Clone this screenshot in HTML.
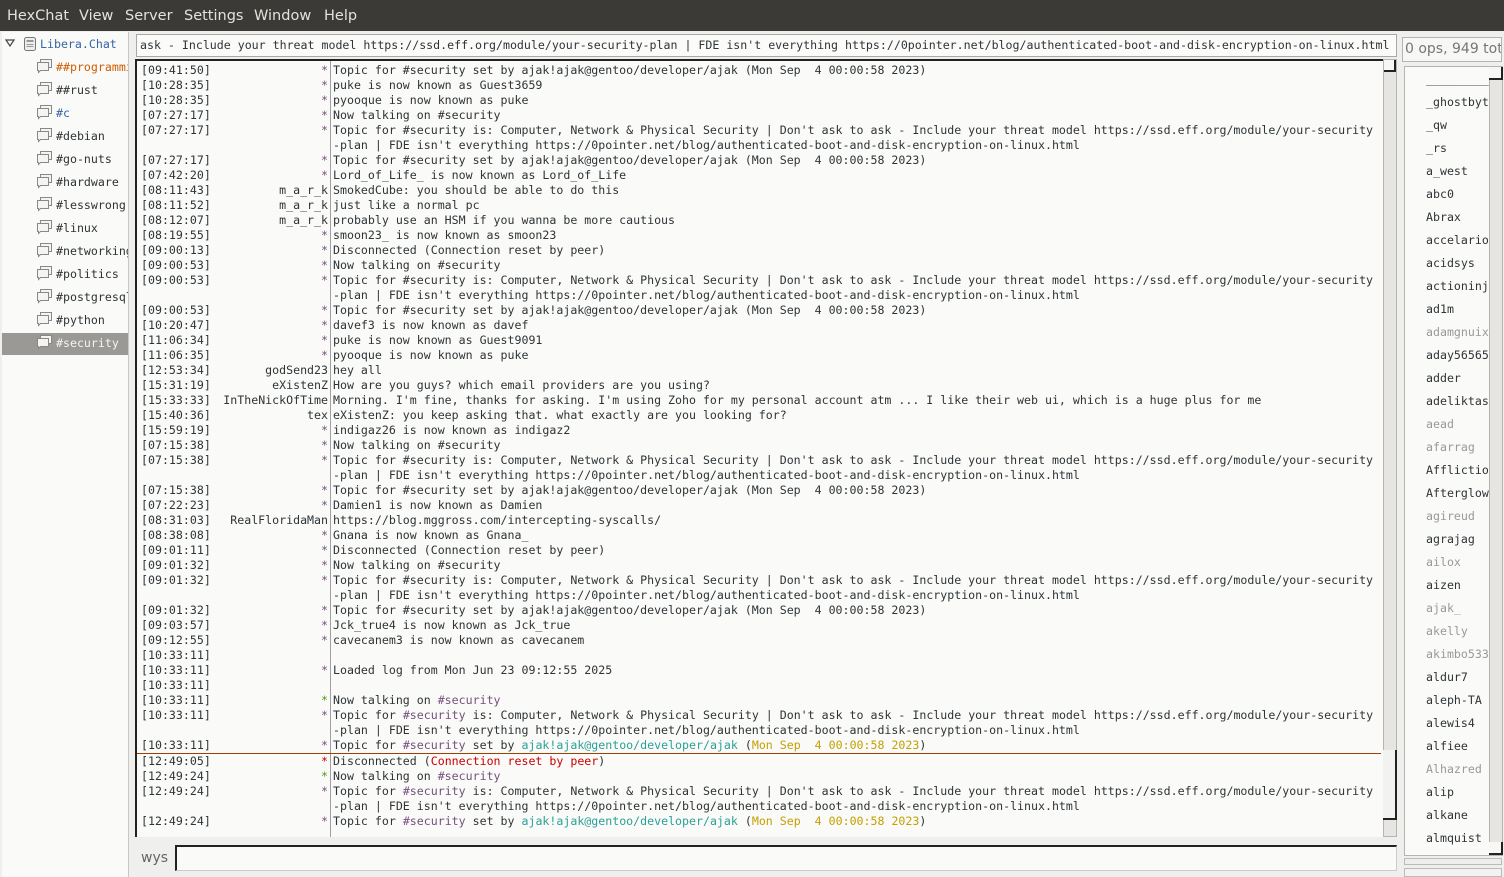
<!DOCTYPE html>
<html><head><meta charset="utf-8">
<style>
*{margin:0;padding:0;box-sizing:border-box}
body{width:1504px;height:877px;background:#efefed;position:relative;overflow:hidden;font-family:"DejaVu Sans Mono","Liberation Mono",monospace;font-size:11.6px;color:#2e3436}
.menu{position:absolute;left:0;top:0;width:1504px;height:31px;background:#3b3a36;color:#e4e2dc;font-family:"DejaVu Sans","Liberation Sans",sans-serif;font-size:14.5px}
.menu span{position:absolute;top:8px}
.tree{position:absolute;left:2px;top:32px;width:127px;height:845px;background:#fafaf9;border-right:1px solid #c8c7c3}
.ch{position:absolute;left:54px;height:20px;line-height:20px;white-space:nowrap;width:72px;overflow:hidden;color:#2e3436}
.sel{position:absolute;left:0;top:301px;width:126px;height:22px;background:#9b9995}
.topic{position:absolute;left:136px;top:34px;width:1261px;height:23px;background:#fbfbfa;border:1px solid #a9a8a4;line-height:20px;padding-left:3px;white-space:nowrap;overflow:hidden}
.chat{position:absolute;left:135px;top:59px;width:1248px;height:778px;background:#fafaf9;border-left:2px solid #222;border-top:2px solid #222}
.sep{position:absolute;left:193px;top:0;width:1px;height:776px;background:#a0a09c}
.r{position:absolute;left:0;height:15px;line-height:15px;white-space:pre;width:1246px;margin-top:1px}
.t{position:absolute;left:4px}
.n{position:absolute;right:1055px;text-align:right}
.m{position:absolute;left:196px}
.st{color:#75507b}
.p{color:#75507b}.g{color:#4e9a06}.rd{color:#cc0000}.tl{color:#2aa198}.y{color:#c4a000}
.vs{position:absolute;left:1383px;top:59px;width:14px;height:778px;background:#e6e5e1;border:1px solid #b5b4b0}
.ulh{position:absolute;left:1402px;top:37px;width:100px;height:25px;border:1px solid #b5b4b0;background:#f7f7f5;font-family:"DejaVu Sans","Liberation Sans",sans-serif;font-size:14px;color:#777;line-height:23px;padding-left:2px;white-space:nowrap;overflow:hidden}
.ul{position:absolute;left:1404px;top:66px;width:86px;height:790px;background:#fafaf9;border:1px solid #b5b4b0;overflow:hidden}
.u{position:absolute;left:21px;white-space:nowrap;height:16px;line-height:16px}
.gr{color:#999}
.uvs{position:absolute;left:1489px;top:66px;width:14px;height:790px;background:#e6e5e1;border:1px solid #b5b4b0}
.inp{position:absolute;left:175px;top:845px;width:1222px;height:26px;background:#fafaf9;border:2px solid #222;border-right:1px solid #ccc;border-bottom:1px solid #ccc}
</style></head><body>
<div class="menu"><span style="left:7px">HexChat</span><span style="left:79px">View</span><span style="left:125px">Server</span><span style="left:184px">Settings</span><span style="left:254px">Window</span><span style="left:324px">Help</span></div>

<div class="tree">
<div class="sel"></div>
<svg style="position:absolute;left:3px;top:7px" width="10" height="8"><path d="M1 1 L9 1 L5 7 Z" fill="none" stroke="#444" stroke-width="1.2"/></svg>
<svg style="position:absolute;left:21px;top:4px" width="14" height="16"><rect x="1.5" y="1.5" width="11" height="13" rx="2" fill="#eee" stroke="#777"/><rect x="3.5" y="4" width="7" height="2" fill="#999"/><rect x="3.5" y="8" width="7" height="1" fill="#999"/><rect x="3.5" y="10" width="7" height="1" fill="#999"/></svg>
<div class="ch" style="left:38px;top:2px;color:#3465a4;width:90px">Libera.Chat</div>
<div class="ch" style="top:25px;color:#ce5c00">##programming</div>
<div class="ch" style="top:48px">##rust</div>
<div class="ch" style="top:71px;color:#3465a4">#c</div>
<div class="ch" style="top:94px">#debian</div>
<div class="ch" style="top:117px">#go-nuts</div>
<div class="ch" style="top:140px">#hardware</div>
<div class="ch" style="top:163px">#lesswrong</div>
<div class="ch" style="top:186px">#linux</div>
<div class="ch" style="top:209px">#networking</div>
<div class="ch" style="top:232px">#politics</div>
<div class="ch" style="top:255px">#postgresql</div>
<div class="ch" style="top:278px">#python</div>
<div class="ch" style="top:301px;color:#f4f4f2">#security</div>
<svg style="position:absolute;left:34px;top:25px" width="18" height="320">
<g fill="#f4f4f2" stroke="#888" stroke-width="1">
<path d="M4.5 2.5h11v8h-8l-2 2v-2h-1z"/><path d="M1.5 5.5h11v8h-8l-2 2v-2h-1z"/>
<g transform="translate(0,23)"><path d="M4.5 2.5h11v8h-8l-2 2v-2h-1z"/><path d="M1.5 5.5h11v8h-8l-2 2v-2h-1z"/></g>
<g transform="translate(0,46)"><path d="M4.5 2.5h11v8h-8l-2 2v-2h-1z"/><path d="M1.5 5.5h11v8h-8l-2 2v-2h-1z"/></g>
<g transform="translate(0,69)"><path d="M4.5 2.5h11v8h-8l-2 2v-2h-1z"/><path d="M1.5 5.5h11v8h-8l-2 2v-2h-1z"/></g>
<g transform="translate(0,92)"><path d="M4.5 2.5h11v8h-8l-2 2v-2h-1z"/><path d="M1.5 5.5h11v8h-8l-2 2v-2h-1z"/></g>
<g transform="translate(0,115)"><path d="M4.5 2.5h11v8h-8l-2 2v-2h-1z"/><path d="M1.5 5.5h11v8h-8l-2 2v-2h-1z"/></g>
<g transform="translate(0,138)"><path d="M4.5 2.5h11v8h-8l-2 2v-2h-1z"/><path d="M1.5 5.5h11v8h-8l-2 2v-2h-1z"/></g>
<g transform="translate(0,161)"><path d="M4.5 2.5h11v8h-8l-2 2v-2h-1z"/><path d="M1.5 5.5h11v8h-8l-2 2v-2h-1z"/></g>
<g transform="translate(0,184)"><path d="M4.5 2.5h11v8h-8l-2 2v-2h-1z"/><path d="M1.5 5.5h11v8h-8l-2 2v-2h-1z"/></g>
<g transform="translate(0,207)"><path d="M4.5 2.5h11v8h-8l-2 2v-2h-1z"/><path d="M1.5 5.5h11v8h-8l-2 2v-2h-1z"/></g>
<g transform="translate(0,230)"><path d="M4.5 2.5h11v8h-8l-2 2v-2h-1z"/><path d="M1.5 5.5h11v8h-8l-2 2v-2h-1z"/></g>
<g transform="translate(0,253)"><path d="M4.5 2.5h11v8h-8l-2 2v-2h-1z"/><path d="M1.5 5.5h11v8h-8l-2 2v-2h-1z"/></g>
<g transform="translate(0,276)"><path d="M4.5 2.5h11v8h-8l-2 2v-2h-1z"/><path d="M1.5 5.5h11v8h-8l-2 2v-2h-1z"/></g>
</g></svg>
</div>

<div class="topic">ask - Include your threat model https://ssd.eff.org/module/your-security-plan | FDE isn't everything https://0pointer.net/blog/authenticated-boot-and-disk-encryption-on-linux.html</div>

<div class="chat">
<div class="sep"></div>
<div class="r" style="top:1px"><span class="t">[09:41:50]</span><span class="n st">*</span><span class="m">Topic for #security set by ajak!ajak@gentoo/developer/ajak (Mon Sep  4 00:00:58 2023)</span></div>
<div class="r" style="top:16px"><span class="t">[10:28:35]</span><span class="n st">*</span><span class="m">puke is now known as Guest3659</span></div>
<div class="r" style="top:31px"><span class="t">[10:28:35]</span><span class="n st">*</span><span class="m">pyooque is now known as puke</span></div>
<div class="r" style="top:46px"><span class="t">[07:27:17]</span><span class="n st">*</span><span class="m">Now talking on #security</span></div>
<div class="r" style="top:61px"><span class="t">[07:27:17]</span><span class="n st">*</span><span class="m">Topic for #security is: Computer, Network &amp; Physical Security | Don't ask to ask - Include your threat model https://ssd.eff.org/module/your-security</span></div>
<div class="r" style="top:76px"><span class="m">-plan | FDE isn't everything https://0pointer.net/blog/authenticated-boot-and-disk-encryption-on-linux.html</span></div>
<div class="r" style="top:91px"><span class="t">[07:27:17]</span><span class="n st">*</span><span class="m">Topic for #security set by ajak!ajak@gentoo/developer/ajak (Mon Sep  4 00:00:58 2023)</span></div>
<div class="r" style="top:106px"><span class="t">[07:42:20]</span><span class="n st">*</span><span class="m">Lord_of_Life_ is now known as Lord_of_Life</span></div>
<div class="r" style="top:121px"><span class="t">[08:11:43]</span><span class="n">m_a_r_k</span><span class="m">SmokedCube: you should be able to do this</span></div>
<div class="r" style="top:136px"><span class="t">[08:11:52]</span><span class="n">m_a_r_k</span><span class="m">just like a normal pc</span></div>
<div class="r" style="top:151px"><span class="t">[08:12:07]</span><span class="n">m_a_r_k</span><span class="m">probably use an HSM if you wanna be more cautious</span></div>
<div class="r" style="top:166px"><span class="t">[08:19:55]</span><span class="n st">*</span><span class="m">smoon23_ is now known as smoon23</span></div>
<div class="r" style="top:181px"><span class="t">[09:00:13]</span><span class="n st">*</span><span class="m">Disconnected (Connection reset by peer)</span></div>
<div class="r" style="top:196px"><span class="t">[09:00:53]</span><span class="n st">*</span><span class="m">Now talking on #security</span></div>
<div class="r" style="top:211px"><span class="t">[09:00:53]</span><span class="n st">*</span><span class="m">Topic for #security is: Computer, Network &amp; Physical Security | Don't ask to ask - Include your threat model https://ssd.eff.org/module/your-security</span></div>
<div class="r" style="top:226px"><span class="m">-plan | FDE isn't everything https://0pointer.net/blog/authenticated-boot-and-disk-encryption-on-linux.html</span></div>
<div class="r" style="top:241px"><span class="t">[09:00:53]</span><span class="n st">*</span><span class="m">Topic for #security set by ajak!ajak@gentoo/developer/ajak (Mon Sep  4 00:00:58 2023)</span></div>
<div class="r" style="top:256px"><span class="t">[10:20:47]</span><span class="n st">*</span><span class="m">davef3 is now known as davef</span></div>
<div class="r" style="top:271px"><span class="t">[11:06:34]</span><span class="n st">*</span><span class="m">puke is now known as Guest9091</span></div>
<div class="r" style="top:286px"><span class="t">[11:06:35]</span><span class="n st">*</span><span class="m">pyooque is now known as puke</span></div>
<div class="r" style="top:301px"><span class="t">[12:53:34]</span><span class="n">godSend23</span><span class="m">hey all</span></div>
<div class="r" style="top:316px"><span class="t">[15:31:19]</span><span class="n">eXistenZ</span><span class="m">How are you guys? which email providers are you using?</span></div>
<div class="r" style="top:331px"><span class="t">[15:33:33]</span><span class="n">InTheNickOfTime</span><span class="m">Morning. I'm fine, thanks for asking. I'm using Zoho for my personal account atm ... I like their web ui, which is a huge plus for me</span></div>
<div class="r" style="top:346px"><span class="t">[15:40:36]</span><span class="n">tex</span><span class="m">eXistenZ: you keep asking that. what exactly are you looking for?</span></div>
<div class="r" style="top:361px"><span class="t">[15:59:19]</span><span class="n st">*</span><span class="m">indigaz26 is now known as indigaz2</span></div>
<div class="r" style="top:376px"><span class="t">[07:15:38]</span><span class="n st">*</span><span class="m">Now talking on #security</span></div>
<div class="r" style="top:391px"><span class="t">[07:15:38]</span><span class="n st">*</span><span class="m">Topic for #security is: Computer, Network &amp; Physical Security | Don't ask to ask - Include your threat model https://ssd.eff.org/module/your-security</span></div>
<div class="r" style="top:406px"><span class="m">-plan | FDE isn't everything https://0pointer.net/blog/authenticated-boot-and-disk-encryption-on-linux.html</span></div>
<div class="r" style="top:421px"><span class="t">[07:15:38]</span><span class="n st">*</span><span class="m">Topic for #security set by ajak!ajak@gentoo/developer/ajak (Mon Sep  4 00:00:58 2023)</span></div>
<div class="r" style="top:436px"><span class="t">[07:22:23]</span><span class="n st">*</span><span class="m">Damien1 is now known as Damien</span></div>
<div class="r" style="top:451px"><span class="t">[08:31:03]</span><span class="n">RealFloridaMan</span><span class="m">https://blog.mggross.com/intercepting-syscalls/</span></div>
<div class="r" style="top:466px"><span class="t">[08:38:08]</span><span class="n st">*</span><span class="m">Gnana is now known as Gnana_</span></div>
<div class="r" style="top:481px"><span class="t">[09:01:11]</span><span class="n st">*</span><span class="m">Disconnected (Connection reset by peer)</span></div>
<div class="r" style="top:496px"><span class="t">[09:01:32]</span><span class="n st">*</span><span class="m">Now talking on #security</span></div>
<div class="r" style="top:511px"><span class="t">[09:01:32]</span><span class="n st">*</span><span class="m">Topic for #security is: Computer, Network &amp; Physical Security | Don't ask to ask - Include your threat model https://ssd.eff.org/module/your-security</span></div>
<div class="r" style="top:526px"><span class="m">-plan | FDE isn't everything https://0pointer.net/blog/authenticated-boot-and-disk-encryption-on-linux.html</span></div>
<div class="r" style="top:541px"><span class="t">[09:01:32]</span><span class="n st">*</span><span class="m">Topic for #security set by ajak!ajak@gentoo/developer/ajak (Mon Sep  4 00:00:58 2023)</span></div>
<div class="r" style="top:556px"><span class="t">[09:03:57]</span><span class="n st">*</span><span class="m">Jck_true4 is now known as Jck_true</span></div>
<div class="r" style="top:571px"><span class="t">[09:12:55]</span><span class="n st">*</span><span class="m">cavecanem3 is now known as cavecanem</span></div>
<div class="r" style="top:586px"><span class="t">[10:33:11]</span></div>
<div class="r" style="top:601px"><span class="t">[10:33:11]</span><span class="n st">*</span><span class="m">Loaded log from Mon Jun 23 09:12:55 2025</span></div>
<div class="r" style="top:616px"><span class="t">[10:33:11]</span></div>
<div class="r" style="top:631px"><span class="t">[10:33:11]</span><span class="n g">*</span><span class="m">Now talking on <span class="p">#security</span></span></div>
<div class="r" style="top:646px"><span class="t">[10:33:11]</span><span class="n st">*</span><span class="m">Topic for <span class="p">#security</span> is: Computer, Network &amp; Physical Security | Don't ask to ask - Include your threat model https://ssd.eff.org/module/your-security</span></div>
<div class="r" style="top:661px"><span class="m">-plan | FDE isn't everything https://0pointer.net/blog/authenticated-boot-and-disk-encryption-on-linux.html</span></div>
<div class="r" style="top:676px"><span class="t">[10:33:11]</span><span class="n st">*</span><span class="m">Topic for <span class="p">#security</span> set by <span class="tl">ajak!ajak@gentoo/developer/ajak</span> (<span class="y">Mon Sep  4 00:00:58 2023</span>)</span></div>
<div style="position:absolute;left:0;top:692px;width:1244px;height:1px;background:#a04000"></div>
<div class="r" style="top:692px"><span class="t">[12:49:05]</span><span class="n rd">*</span><span class="m">Disconnected (<span class="rd">Connection reset by peer</span>)</span></div>
<div class="r" style="top:707px"><span class="t">[12:49:24]</span><span class="n g">*</span><span class="m">Now talking on <span class="p">#security</span></span></div>
<div class="r" style="top:722px"><span class="t">[12:49:24]</span><span class="n st">*</span><span class="m">Topic for <span class="p">#security</span> is: Computer, Network &amp; Physical Security | Don't ask to ask - Include your threat model https://ssd.eff.org/module/your-security</span></div>
<div class="r" style="top:737px"><span class="m">-plan | FDE isn't everything https://0pointer.net/blog/authenticated-boot-and-disk-encryption-on-linux.html</span></div>
<div class="r" style="top:752px"><span class="t">[12:49:24]</span><span class="n st">*</span><span class="m">Topic for <span class="p">#security</span> set by <span class="tl">ajak!ajak@gentoo/developer/ajak</span> (<span class="y">Mon Sep  4 00:00:58 2023</span>)</span></div>
</div>
<div class="vs"><div style="position:absolute;left:0;top:0;width:12px;height:12px;background:#f7f7f5;border-right:2px solid #222;border-bottom:2px solid #222"></div><div style="position:absolute;left:-1px;top:690px;width:14px;height:70px;background:#f2f2f0;border-right:2px solid #222;border-bottom:2px solid #222"></div></div>

<div style="position:absolute;left:141px;top:850px;font-family:'DejaVu Sans','Liberation Sans',sans-serif;font-size:14px;color:#666">wys</div>
<div class="inp"></div>

<div class="ulh">0 ops, 949 total</div>
<div class="ul">
<div class="u" style="top:4px">_________</div>
<div class="u" style="top:27px">_ghostbyte</div>
<div class="u" style="top:50px">_qw</div>
<div class="u" style="top:73px">_rs</div>
<div class="u" style="top:96px">a_west</div>
<div class="u" style="top:119px">abc0</div>
<div class="u" style="top:142px">Abrax</div>
<div class="u" style="top:165px">accelario</div>
<div class="u" style="top:188px">acidsys</div>
<div class="u" style="top:211px">actioninja</div>
<div class="u" style="top:234px">ad1m</div>
<div class="u gr" style="top:257px">adamgnuix</div>
<div class="u" style="top:280px">aday56565</div>
<div class="u" style="top:303px">adder</div>
<div class="u" style="top:326px">adeliktas</div>
<div class="u gr" style="top:349px">aead</div>
<div class="u gr" style="top:372px">afarrag</div>
<div class="u" style="top:395px">Affliction</div>
<div class="u" style="top:418px">Afterglow</div>
<div class="u gr" style="top:441px">agireud</div>
<div class="u" style="top:464px">agrajag</div>
<div class="u gr" style="top:487px">ailox</div>
<div class="u" style="top:510px">aizen</div>
<div class="u gr" style="top:533px">ajak_</div>
<div class="u gr" style="top:556px">akelly</div>
<div class="u gr" style="top:579px">akimbo533</div>
<div class="u" style="top:602px">aldur7</div>
<div class="u" style="top:625px">aleph-TA</div>
<div class="u" style="top:648px">alewis4</div>
<div class="u" style="top:671px">alfiee</div>
<div class="u gr" style="top:694px">Alhazred</div>
<div class="u" style="top:717px">alip</div>
<div class="u" style="top:740px">alkane</div>
<div class="u" style="top:763px">almquist</div>
<div class="u" style="top:786px">alpha</div>
</div>
<div class="uvs"><div style="position:absolute;left:-1px;top:0;width:14px;height:13px;background:#f7f7f5;border-right:2px solid #222;border-bottom:2px solid #222"></div><div style="position:absolute;left:-1px;top:775px;width:14px;height:13px;background:#f7f7f5;border-right:2px solid #222;border-bottom:2px solid #222"></div></div>
<div style="position:absolute;left:1404px;top:858px;width:98px;height:7px;border:1px solid #bbb;background:#eee"></div>
<div style="position:absolute;left:1404px;top:868px;width:98px;height:9px;border:1px solid #bbb;background:#f2f2f0"></div>
</body></html>
